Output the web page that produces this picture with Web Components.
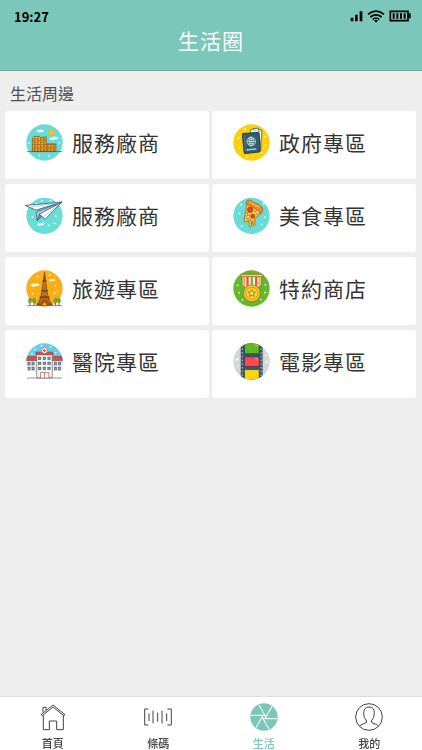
<!DOCTYPE html>
<html lang="zh-Hant">
<head>
<meta charset="utf-8">
<meta name="viewport" content="width=device-width, initial-scale=1">
<title>生活圈</title>
<style>
  html, body {
    height: 100%;
    margin: 0;
  }

  body {
    --color-brand: #7bc7b9;
    --color-page: #eee;
    --color-text: #333;
    --color-muted: #505050;
    font-family: "Noto Sans CJK TC", sans-serif;
    color: var(--color-text);
  }
</style>
</head>
<body>
<life-app>
  <app-header slot="header" time="19:27">生活圈</app-header>
  <category-section label="生活周邊">
    <category-card icon="colosseum">服務廠商</category-card>
    <category-card icon="passport">政府專區</category-card>
    <category-card icon="plane">服務廠商</category-card>
    <category-card icon="pizza">美食專區</category-card>
    <category-card icon="tower">旅遊專區</category-card>
    <category-card icon="medal">特約商店</category-card>
    <category-card icon="hospital">醫院專區</category-card>
    <category-card icon="film">電影專區</category-card>
  </category-section>
  <tab-bar slot="footer">
    <tab-item icon="home">首頁</tab-item>
    <tab-item icon="barcode">條碼</tab-item>
    <tab-item icon="life" active>生活</tab-item>
    <tab-item icon="me">我的</tab-item>
  </tab-bar>
</life-app>

<script>
const star = (x, y, r = 4) =>
    `<path d="M${x} ${y - r}l${r / 3} ${r * 2 / 3} ${r * 2 / 3} ${r / 3}-${r * 2 / 3} ${r / 3}-${r / 3} ${r * 2 / 3}-${r / 3}-${r * 2 / 3}-${r * 2 / 3}-${r / 3} ${r * 2 / 3}-${r / 3}z" fill="#e9fffb"/>`;

const grid = (xs, ys, w, h, attrs) =>
    ys.map((y) => xs.map((x) =>
        `<rect x="${x}" y="${y}" width="${w}" height="${h}" ${attrs}/>`).join('')).join('');

const tree = (x) => `
  <path d="M${x} 134v-13" stroke="#75481e" stroke-width="2.5"/>
  <ellipse cx="${x}" cy="119" rx="5" ry="7" fill="#79a72d" stroke="#4f7424" stroke-width="1"/>`;

const categoryIcons = {
  colosseum: {box: '36 28 110 110', art: `
    <circle cx="91" cy="83" r="54" fill="#69dcd8"/>
    <circle cx="112" cy="53" r="8" fill="#fcc51d" stroke="#eda71c" stroke-width="2"/>
    <path d="M67 50q2-5 7-4 6-4 9 0 6-1 7 4l-9 2-4 3-3-3z" fill="#f5fffe"/>
    <path d="M105 72q4-5 9-4 5-5 12-1 5-2 5 3-5 4-10 4-8 5-16-2z" fill="#f5fffe"/>
    ${star(45, 85)}${star(76, 122)}${star(104, 123)}${star(135, 84)}
    <path d="M55 110V70l5-5h15l4 3 17-2v21h29v23z" fill="#f1aa20" stroke="#7d4b20" stroke-width="2"/>
    <path d="M55 78h41M55 89h70M55 100h70M96 87v23" stroke="#8a531e" stroke-width="2"/>
    ${grid([60, 69, 78, 87], [70, 81], 4, 5, 'fill="#8c521d"')}
    ${grid([60, 69, 78, 87, 99, 108, 117], [92, 103], 4, 6, 'fill="#8c521d"')}
    <path d="M39 110h105" stroke="#5c4a37" stroke-width="2"/>`},
  passport: {box: '24 28 110 110', art: `
    <circle cx="79" cy="83" r="54" fill="#fccf0b"/>
    ${star(59, 43)}${star(41, 70)}${star(42, 99)}${star(120, 65)}${star(121, 91)}${star(109, 113)}${star(67, 126)}
    <path d="M84 41l26 5-4 60-27-6z" fill="#e4f4f4" stroke="#39505e" stroke-width="2" stroke-linejoin="round"/>
    <path d="M76 45l23-5 8 59-28 5z" fill="#fff" stroke="#39505e" stroke-width="2" stroke-linejoin="round"/>
    <path d="M81 49l15-3M99 49l7 1M98 55l7 1" stroke="#74a4ae" stroke-width="2"/>
    <path d="M55 56l41-3q5 0 5 4l4 50q0 4-4 4l-39 5q-5 0-5-5l-5-50q0-4 3-5z" fill="#335c6c" stroke="#263e4e" stroke-width="3"/>
    <path d="M57 60l4 50" stroke="#668895" stroke-width="2"/>
    <circle cx="78" cy="80" r="13" fill="#396473" stroke="#d9eeee" stroke-width="2"/>
    <path d="M65 80h26M78 67v26M68 72q10 5 20 0M68 88q10-5 20 0" stroke="#d9eeee" stroke-width="2" fill="none"/>
    <ellipse cx="78" cy="80" rx="6" ry="13" fill="none" stroke="#d9eeee" stroke-width="2"/>
    <path d="M65 105l28-3" stroke="#d9eeee" stroke-width="4" stroke-dasharray="4 1"/>`},
  plane: {box: '36 31 110 110', art: `
    <circle cx="91" cy="87" r="54" fill="#69ddd6"/>
    ${star(83, 42)}${star(109, 43)}${star(67, 50)}${star(55, 91)}${star(125, 88)}${star(121, 110)}${star(104, 115)}
    <path d="M69 113q6-7 14-4 5-4 9 0-2 6-12 7-7 4-11-3z" fill="#edfffd"/>
    <path d="M66 76l3 25 12-13 62-42z" fill="#b4cfe4" stroke="#36597b" stroke-width="2" stroke-linejoin="round"/>
    <path d="M33 56l110-10-77 24z" fill="#fff" stroke="#36597b" stroke-width="2.5" stroke-linejoin="round"/>
    <path d="M75 82l68-36-50 51z" fill="#fff" stroke="#36597b" stroke-width="2.5" stroke-linejoin="round"/>
    <path d="M69 101l6-19 8 7z" fill="#688dac" stroke="#36597b" stroke-width="2"/>
    <path d="M50 61l83-13M88 89l43-34" stroke="#93adc5" stroke-width="2"/>`},
  pizza: {box: '24 31 110 110', art: `
    <circle cx="79" cy="87" r="54" fill="#69dcd8"/>
    ${star(48, 54)}${star(43, 80)}${star(119, 91)}${star(109, 113)}${star(50, 117)}${star(115, 52)}
    <path d="M66 48l44 28q-5 8-12 12l-9 8v18q-3 5-6 0v-10h-4v14q-3 6-7 0v-17l-5 2-8 2q-3-2-2-6z" fill="#ffc72d" stroke="#a84b20" stroke-width="2" stroke-linejoin="round"/>
    <path d="M66 42q5-5 12 0 10 7 23 11 9 5 11 14 2 8-4 12-4 1-8-4-10-12-26-18-14-4-11-9 0-4 3-6z" fill="#ed8b22" stroke="#a44b20" stroke-width="2"/>
    <path d="M72 44q15 12 31 16" stroke="#ffc25b" stroke-width="3" fill="none"/>
    <circle cx="75" cy="69" r="8" fill="#d9482f" stroke="#8f351f" stroke-width="2"/>
    <circle cx="83" cy="88" r="6" fill="#d9482f" stroke="#8f351f" stroke-width="2"/>
    <path d="M91 74q7-5 12 2l-7 9-2-5zM65 86l10-1-2 9-8 2z" fill="#fff4c8" stroke="#9b6130" stroke-width="2"/>
    <circle cx="76" cy="99" r="2" fill="#60552a"/><circle cx="67" cy="79" r="2" fill="#60552a"/>`},
  tower: {box: '36 28 110 110', art: `
    <circle cx="91" cy="83" r="54" fill="#fbae17"/>
    ${star(71, 48)}${star(107, 43)}${star(123, 75)}${star(56, 98)}${star(121, 97)}
    <path d="M48 73q5-6 10-4 7-5 13 0 6-1 5 4-7 3-11 3-8 5-12-1z" fill="#fff7d5"/>
    <path d="M103 58q5-5 12-2 6-3 9 2-5 4-10 3-6 4-11-3z" fill="#fff7d5"/>
    <path d="M91 35l3 24 4 30q5 30 16 43H99q-8-18-16 0H68q11-13 16-43l4-30z" fill="#9d591e" stroke="#683817" stroke-width="2"/>
    <path d="M88 64l6 6-7 8 9 8-11 7M94 64l-6 6 7 8-9 8 11 7M81 106l18-11M102 106L84 95M77 123l9-12h10l10 12" stroke="#e69a26" stroke-width="2" fill="none"/>
    <path d="M85 61h12M81 90h20M76 109h30" stroke="#5f3319" stroke-width="3"/>
    ${tree(48)}${tree(60)}${tree(124)}${tree(134)}
    <path d="M40 134h103" stroke="#674329" stroke-width="2"/>`},
  medal: {box: '24 28 110 110', art: `
    <circle cx="79" cy="83" r="54" fill="#66b72c"/>
    ${star(38, 73)}${star(42, 96)}${star(120, 72)}${star(119, 95)}${star(107, 116)}${star(52, 117)}
    <path d="M51 47h58v26L80 91 51 73z" fill="#fff5e9" stroke="#695b2f" stroke-width="2"/>
    <path d="M57 48v27M103 48v27" stroke="#f7ae2b" stroke-width="6"/>
    <path d="M67 48v33M93 48v33" stroke="#ed534b" stroke-width="7"/>
    <path d="M80 48v40" stroke="#71bc45" stroke-width="7"/>
    <rect x="47" y="41" width="66" height="7" rx="2" fill="#fed657" stroke="#7f612b" stroke-width="2"/>
    <circle cx="80" cy="97" r="25" fill="#ffcd26" stroke="#8f6824" stroke-width="2"/>
    <circle cx="80" cy="97" r="18" fill="#ffd633" stroke="#d79620" stroke-width="3"/>
    <path d="M80 86l3 7 8 1-6 5 2 8-7-4-7 4 2-8-6-5 8-1z" fill="#ffe155" stroke="#7d5820" stroke-width="2"/>`},
  hospital: {box: '36 27 110 110', art: `
    <clipPath id="round"><circle cx="91" cy="82" r="54"/></clipPath>
    <g clip-path="url(#round)">
      <path d="M36 27h110v83H36z" fill="#67cce8"/>
      <path d="M36 108h110v30H36z" fill="#fff"/>
      <path d="M36 69h110v41H36z" fill="#eee8e5"/>
      <path d="M36 67h110v12H36z" fill="#d94d4c" stroke="#943d43" stroke-width="2"/>
      ${star(63, 46)}${star(82, 35)}${star(109, 39)}${star(124, 56)}${star(54, 59)}
    </g>
    ${grid([42, 54, 121, 133], [84, 99], 6, 8, 'fill="#58bfd0" stroke="#52606d" stroke-width="2"')}
    <path d="M68 61h46v70H68z" fill="#fff8f2" stroke="#735e62" stroke-width="2"/>
    <path d="M66 54h50v8H66z" fill="#df4d4d" stroke="#914044" stroke-width="2"/>
    <circle cx="91" cy="49" r="9" fill="#fff" stroke="#bc5153" stroke-width="2"/>
    <path d="M91 44v10M86 49h10" stroke="#db4a4b" stroke-width="3"/>
    ${grid([73, 87, 101], [69, 84, 99], 7, 7, 'fill="#58bfd0" stroke="#405465" stroke-width="2"')}
    <path d="M79 131v-16h25v16M91 115v16" fill="#fff" stroke="#a44d4f" stroke-width="2"/>
    <path d="M39 131h104" stroke="#665c62" stroke-width="2"/>`},
  film: {box: '24 27 110 110', art: `
    <clipPath id="round"><circle cx="79" cy="82" r="54"/></clipPath>
    <g clip-path="url(#round)">
      <path d="M24 27h110v110H24z" fill="#d5d6da"/>
      ${star(36, 76, 6)}${star(39, 95)}${star(121, 64)}${star(124, 83, 5)}
      <path d="M47 27h65v110H47z" fill="#345568"/>
      ${grid([50, 106], [32, 43, 54, 65, 76, 87, 98, 109, 120, 131], 3, 5, 'fill="#a9cad4"')}
      <rect x="58" y="25" width="44" height="34" rx="2" fill="#65b51d" stroke="#263f51" stroke-width="2"/>
      <rect x="58" y="68" width="44" height="29" rx="2" fill="#ff464c" stroke="#263f51" stroke-width="2"/>
      <rect x="58" y="106" width="44" height="34" rx="2" fill="#ffd315" stroke="#263f51" stroke-width="2"/>
      <path d="M88 33h9v8M88 73h9v8" stroke="#fff" stroke-opacity=".5" stroke-width="2" fill="none"/>
    </g>`},
};

const blades = [0, 60, 120, 180, 240, 300].map((angle) =>
    `<path d="M120 76h43" stroke="#fff" transform="rotate(${angle} 159 81)"/>`).join('');

const tabIcons = {
  home: {box: '117 38 84 84', art: `
    <path d="M123 73l36-29 36 29-4 3-32-26-32 26zM130 75v43h18V92h22v26h20V75M129 66V51h9v8"/>`},
  barcode: {box: '433 38 84 84', art: `
    <path d="M446 56h-11v48h11M503 56h12v48h-12M448 69v23M460 61v38M474 67v27M487 61v38M501 69v23"/>`},
  life: {box: '117 39 84 84', art: `
    <circle cx="159" cy="81" r="41" fill="currentColor" stroke="none"/>
    ${blades}`},
  me: {box: '434 39 84 84', art: `
    <circle cx="476" cy="81" r="40"/>
    <path d="M448 109q2-6 13-8 9-2 8-8-10-9-9-25 1-17 16-17t16 17q1 16-9 25-1 6 8 8 11 2 13 8"/>`},
};

const svg = ({box, art}) =>
    `<svg viewBox="${box}" aria-hidden="true">${art}</svg>`;

class LifeApp extends HTMLElement {
  constructor() {
    super();
    this.attachShadow({mode: 'open'}).innerHTML = `
      <style>
        :host {
          display: flex;
          flex-direction: column;
          min-height: 100%;
          background: var(--color-page);
        }

        main { flex: 1; }
      </style>
      <slot name="header"></slot>
      <main><slot></slot></main>
      <slot name="footer"></slot>`;
  }
}

class AppHeader extends HTMLElement {
  constructor() {
    super();
    this.attachShadow({mode: 'open'}).innerHTML = `
      <style>
        :host {
          display: block;
          background: var(--color-brand);
          border-bottom: 1px solid #72a59c;
          padding-bottom: 14px;
        }

        .status {
          display: flex;
          justify-content: space-between;
          align-items: center;
          height: 24px;
          padding: 8px 11px 0 14px;
          box-sizing: border-box;
          color: #000;
          font-size: 13px;
          font-weight: 700;
        }

        .status svg {
          width: 61px;
          height: 14px;
        }

        h1 {
          margin: 0;
          color: #fff;
          font-size: 21px;
          font-weight: 400;
          letter-spacing: 1px;
          line-height: 32px;
          text-align: center;
        }
      </style>
      <div class="status">
        <span></span>
        <svg viewBox="418 29 183 42" aria-hidden="true">
          <path d="M420 55h8v11h-8zM433 46h8v20h-8zM447 36h8v30h-8z"/>
          <path d="M472 45q24-19 48 0M479 53q17-13 34 0M486 60q10-8 20 0" fill="none" stroke="#000" stroke-width="5"/>
          <path d="M490 63q6-4 12 0l-6 7z"/>
          <path d="M539 36h53v28h-53z" fill="none" stroke="#000" stroke-width="5"/>
          <path d="M594 42h6v15h-6zM546 42h6v16h-6zM557 42h6v16h-6zM568 42h6v16h-6zM579 42h6v16h-6z"/>
        </svg>
      </div>
      <h1><slot></slot></h1>`;
  }

  connectedCallback() {
    this.shadowRoot.querySelector('span').textContent = this.getAttribute('time');
  }
}

class CategorySection extends HTMLElement {
  constructor() {
    super();
    this.attachShadow({mode: 'open'}).innerHTML = `
      <style>
        :host {
          display: block;
          padding: 10px 6px 16px 5px;
        }

        h2 {
          margin: 0 0 6px;
          padding-left: 5px;
          color: var(--color-muted);
          font-size: 16px;
          font-weight: 400;
          line-height: 24px;
        }

        .cards {
          display: grid;
          grid-template-columns: 1fr 1fr;
          gap: 5px 3px;
        }
      </style>
      <h2></h2>
      <div class="cards"><slot></slot></div>`;
  }

  connectedCallback() {
    this.shadowRoot.querySelector('h2').textContent = this.getAttribute('label');
  }
}

class CategoryCard extends HTMLElement {
  constructor() {
    super();
    this.attachShadow({mode: 'open'}).innerHTML = `
      <style>
        :host { display: block; }

        button {
          display: flex;
          align-items: center;
          gap: 9px;
          width: 100%;
          padding: 13px 8px 18px 21px;
          border: 0;
          border-radius: 3px;
          background: #fff;
          color: inherit;
          font: inherit;
          font-size: 21px;
          letter-spacing: 1px;
          line-height: 32px;
          text-align: left;
        }

        svg {
          flex: none;
          width: 37px;
          height: 37px;
          overflow: visible;
        }

        span { padding-bottom: 2px; }
      </style>
      <button type="button">
        ${svg(categoryIcons[this.getAttribute('icon')])}
        <span><slot></slot></span>
      </button>`;
  }
}

class TabBar extends HTMLElement {
  constructor() {
    super();
    this.attachShadow({mode: 'open'}).innerHTML = `
      <style>
        :host {
          display: block;
          position: sticky;
          bottom: 0;
          background: #fff;
          border-top: 1px solid #ddd;
        }

        nav {
          display: grid;
          grid-template-columns: repeat(4, 1fr);
        }
      </style>
      <nav><slot></slot></nav>`;
  }
}

class TabItem extends HTMLElement {
  constructor() {
    super();
    this.attachShadow({mode: 'open'}).innerHTML = `
      <style>
        :host {
          display: block;
          color: #444;
        }

        :host([active]) { color: var(--color-brand); }

        a {
          display: flex;
          flex-direction: column;
          align-items: center;
          gap: 5px;
          padding: 6px 0 0;
          color: inherit;
          font-size: 11px;
          font-weight: 500;
          line-height: 14px;
          text-decoration: none;
        }

        svg {
          width: 28px;
          height: 28px;
          fill: none;
          stroke: currentColor;
          stroke-width: 3;
        }
      </style>
      <a href="#${this.getAttribute('icon')}">
        ${svg(tabIcons[this.getAttribute('icon')])}
        <span><slot></slot></span>
      </a>`;
  }
}

window.customElements.define('life-app', LifeApp);
window.customElements.define('app-header', AppHeader);
window.customElements.define('category-section', CategorySection);
window.customElements.define('category-card', CategoryCard);
window.customElements.define('tab-bar', TabBar);
window.customElements.define('tab-item', TabItem);
</script>
</body>
</html>
